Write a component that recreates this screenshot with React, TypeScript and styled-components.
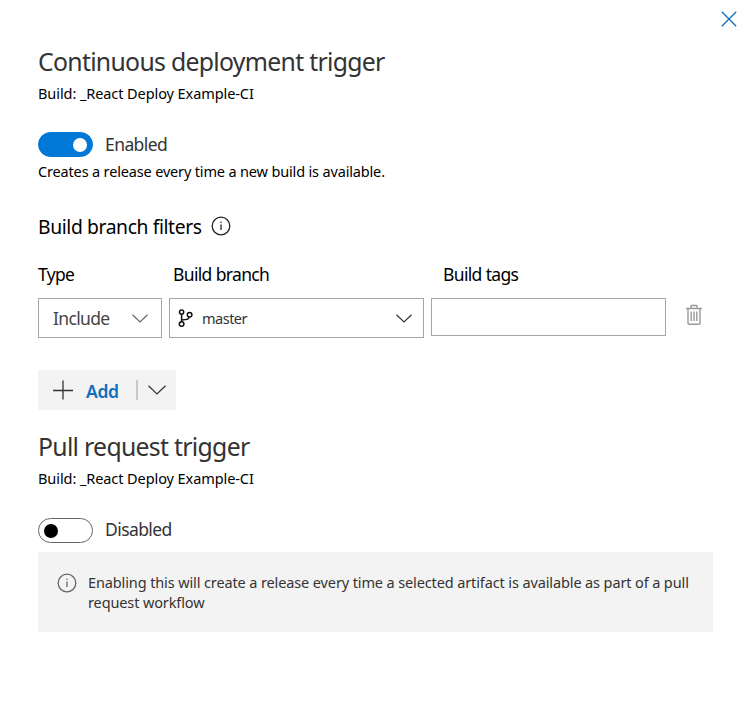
import React from "react";
import styled, { createGlobalStyle } from "styled-components";

const GlobalStyle = createGlobalStyle`
  * { box-sizing: border-box; }
  body {
    margin: 0;
    background: #fff;
    color: #000;
    font-family: "Segoe UI", "Noto Sans", "Open Sans", sans-serif;
  }
  button, input { font: inherit; color: inherit; border-radius: 0; }
  h2, h3, p { margin: 0; font-weight: 400; }
`;

const Panel = styled.main`
  width: 750px;
  height: 713px;
  padding: 0 37px 0 38px;
  background: #fff;
  overflow: hidden;
`;

const PanelHeader = styled.header`
  display: flex;
  justify-content: flex-end;
  height: 43px;
  margin-right: -24px;
  padding-top: 11px;
`;

const IconButton = styled.button`
  display: flex;
  padding: 0;
  border: 0;
  background: none;
  height: max-content;
`;

const Section = styled.section<{ $gap?: number }>`
  display: flex;
  flex-direction: column;
  margin-top: ${(p) => p.$gap ?? 0}px;
`;

const Title = styled.h2`
  font-size: 24.8px;
  line-height: 36px;
  letter-spacing: -0.7px;
  color: #333;
  white-space: nowrap;
`;

const Caption = styled.p<{ $top: number; $spacing: number }>`
  margin-top: ${(p) => p.$top}px;
  font-size: 14.5px;
  line-height: 20px;
  letter-spacing: ${(p) => p.$spacing}px;
  white-space: nowrap;
`;

const ToggleRow = styled.div<{ $top: number }>`
  display: flex;
  align-items: center;
  gap: 12px;
  height: 25px;
  margin-top: ${(p) => p.$top}px;
`;

const Switch = styled.button<{ $on: boolean }>`
  display: flex;
  align-items: center;
  justify-content: ${(p) => (p.$on ? "flex-end" : "flex-start")};
  width: 55px;
  height: 25px;
  padding: 0 5px;
  border: 1px solid ${(p) => (p.$on ? "#0078d7" : "#666")};
  && { border-radius: 13px; }
  background: ${(p) => (p.$on ? "#0078d7" : "#fff")};
`;

const Knob = styled.span<{ $on: boolean }>`
  width: 14px;
  height: 14px;
  border-radius: 50%;
  background: ${(p) => (p.$on ? "#fff" : "#000")};
`;

const SwitchLabel = styled.span<{ $on: boolean }>`
  padding-bottom: ${(p) => (p.$on ? 0 : 2)}px;
  font-size: 17.5px;
  line-height: 25px;
  letter-spacing: -0.58px;
  color: #333;
`;

const FiltersHeading = styled.h3`
  display: flex;
  align-items: center;
  gap: 9px;
  height: 26px;
  margin-top: 32px;
  font-size: 19.3px;
  line-height: 26px;
  letter-spacing: -0.38px;
  white-space: nowrap;
`;

const HeadingText = styled.span`
  padding-top: 2px;
`;

const FilterGrid = styled.div`
  display: grid;
  grid-template-columns: 124px 255px 235px 1fr;
  grid-template-rows: 24px 40px;
  column-gap: 7px;
  row-gap: 12px;
  margin-top: 23px;
`;

const ColumnLabel = styled.span<{ $indent: number }>`
  padding-left: ${(p) => p.$indent}px;
  font-size: 17.5px;
  line-height: 25px;
  letter-spacing: -0.65px;
  white-space: nowrap;
`;

const TypeSelect = styled.button`
  display: flex;
  align-items: center;
  justify-content: space-between;
  padding: 0 13px 0 14px;
  border: 1px solid #a6a6a6;
  background: #fff;
  color: #444;
  font-size: 17.5px;
  letter-spacing: -0.65px;
`;

const BranchSelect = styled.button`
  display: flex;
  align-items: center;
  padding: 0 11px 0 7px;
  border: 1px solid #a6a6a6;
  background: #fff;
  color: #333;
  font-size: 14.5px;
  text-align: left;
`;

const BranchName = styled.span`
  flex: 1;
  margin-left: 9px;
  letter-spacing: -0.5px;
`;

const TagsInput = styled.input`
  width: 100%;
  height: 38px;
  padding: 0 8px;
  border: 1px solid #a6a6a6;
  background: #fff;
`;

const DeleteCell = styled.div`
  padding: 6px 0 0 13px;
`;

const AddButton = styled.div`
  display: flex;
  align-items: center;
  width: 138px;
  height: 40px;
  margin-top: 32px;
  padding-left: 15px;
  background: #f3f3f3;
`;

const AddLabel = styled.span`
  width: 50px;
  margin-left: 13px;
  padding-top: 2px;
  color: #106ebe;
  font-size: 17.5px;
  font-weight: 600;
  letter-spacing: -0.3px;
`;

const Divider = styled.span`
  width: 2px;
  height: 20px;
  margin-right: 10px;
  background: #c8c8c8;
`;

const Notice = styled.div`
  display: flex;
  gap: 11px;
  height: 80px;
  margin-top: 9px;
  padding: 20px 19px;
  background: #f3f3f3;
`;

const NoticeText = styled.p`
  color: #333;
  font-size: 14.5px;
  line-height: 20px;
  letter-spacing: -0.12px;
  white-space: nowrap;
`;

const NoticeIcon = styled.span`
  display: flex;
  padding-top: 1px;
`;

function CloseIcon() {
  return (
    <svg width="16" height="16" viewBox="0 0 16 16" fill="none" stroke="#106ebe" strokeWidth="1.3">
      <path d="M0.8 0.8 15.2 15.2M15.2 0.8 0.8 15.2" />
    </svg>
  );
}

function InfoIcon({ color }: { color: string }) {
  return (
    <svg width="20" height="20" viewBox="0 0 20 20" fill="none" stroke={color}>
      <circle cx="10" cy="10" r="8.8" strokeWidth="1.3" />
      <path d="M10 8.4V14" strokeWidth="1.3" />
      <circle cx="10" cy="6.3" r="0.8" fill={color} stroke="none" />
    </svg>
  );
}

function Chevron({ width, height, color }: { width: number; height: number; color: string }) {
  return (
    <svg width={width} height={height} viewBox={`0 0 ${width} ${height}`} fill="none" stroke={color} strokeWidth="1.2">
      <path d={`M0.5 0.7 ${width / 2} ${height - 1}L${width - 0.5} 0.7`} />
    </svg>
  );
}

function BranchIcon() {
  return (
    <svg width="16" height="19" viewBox="0 0 16 19" fill="none" stroke="#111" strokeWidth="1.5">
      <circle cx="4.6" cy="3.1" r="2.1" />
      <circle cx="12.6" cy="5.7" r="2.3" />
      <circle cx="4.6" cy="15" r="2.3" />
      <path d="M4.6 5.2v7.5M12.2 8C11.7 10.6 9.5 10.8 4.8 10.9" />
    </svg>
  );
}

function TrashIcon() {
  return (
    <svg width="16" height="21" viewBox="0 0 16 21" fill="none" stroke="#999" strokeWidth="1.4">
      <path d="M0 4.5h16M5 4.5V2.2Q5 1.5 5.7 1.5h4.6Q11 1.5 11 2.2V4.5M2 4.5v14.8q0 1 1 1h10q1 0 1-1V4.5" />
      <path d="M5.2 7.5V17M8 7.5V17M10.8 7.5V17" />
    </svg>
  );
}

function PlusIcon() {
  return (
    <svg width="20" height="20" viewBox="0 0 20 20" fill="none" stroke="#333" strokeWidth="1.3">
      <path d="M0 10.5h20M10 .5v19" />
    </svg>
  );
}

function Toggle({ on, label, top }: { on: boolean; label: string; top: number }) {
  return (
    <ToggleRow $top={top}>
      <Switch role="switch" aria-checked={on} aria-label={label} $on={on}>
        <Knob $on={on} />
      </Switch>
      <SwitchLabel $on={on}>{label}</SwitchLabel>
    </ToggleRow>
  );
}

export default function App() {
  return (
    <>
      <GlobalStyle />
      <Panel>
        <PanelHeader>
          <IconButton aria-label="Close"><CloseIcon /></IconButton>
        </PanelHeader>
        <Section>
          <Title>Continuous deployment trigger</Title>
          <Caption $top={4} $spacing={-0.08}>Build: _React Deploy Example-CI</Caption>
          <Toggle on label="Enabled" top={29} />
          <Caption $top={4} $spacing={-0.16}>Creates a release every time a new build is available.</Caption>
          <FiltersHeading>
            <HeadingText>Build branch filters</HeadingText>
            <InfoIcon color="#222" />
          </FiltersHeading>
          <FilterGrid>
            <ColumnLabel $indent={0}>Type</ColumnLabel>
            <ColumnLabel $indent={4}>Build branch</ColumnLabel>
            <ColumnLabel $indent={12}>Build tags</ColumnLabel>
            <span />
            <TypeSelect>
              Include
              <Chevron width={16} height={9} color="#666" />
            </TypeSelect>
            <BranchSelect>
              <BranchIcon />
              <BranchName>master</BranchName>
              <Chevron width={16} height={9} color="#333" />
            </BranchSelect>
            <TagsInput aria-label="Build tags" />
            <DeleteCell>
              <IconButton aria-label="Delete"><TrashIcon /></IconButton>
            </DeleteCell>
          </FilterGrid>
          <AddButton>
            <PlusIcon />
            <AddLabel>Add</AddLabel>
            <Divider />
            <Chevron width={18} height={10} color="#333" />
          </AddButton>
        </Section>
        <Section $gap={18}>
          <Title>Pull request trigger</Title>
          <Caption $top={4} $spacing={-0.08}>Build: _React Deploy Example-CI</Caption>
          <Toggle on={false} label="Disabled" top={30} />
          <Notice>
            <NoticeIcon><InfoIcon color="#666" /></NoticeIcon>
            <NoticeText>
              Enabling this will create a release every time a selected artifact is available as part of a pull
              <br />
              request workflow
            </NoticeText>
          </Notice>
        </Section>
      </Panel>
    </>
  );
}
